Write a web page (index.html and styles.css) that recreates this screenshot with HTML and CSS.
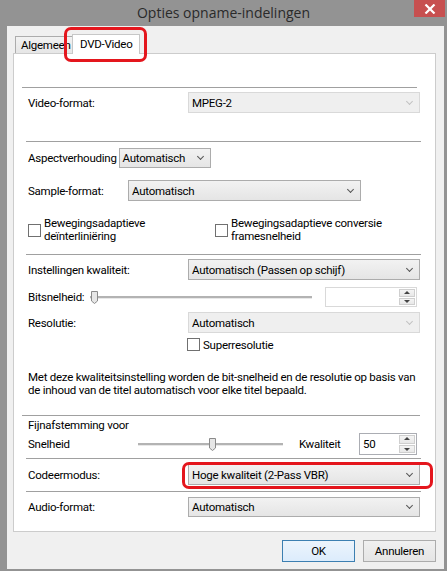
FILE: index.html
```html
<!DOCTYPE html>
<html lang="nl">

<head>
    <meta charset="UTF-8">
    <title>Opties opname-indelingen</title>
    <link rel="stylesheet" href="styles.css">
</head>

<body>
    <div class="window">
        <div class="titlebar">
            <span class="title">Opties opname-indelingen</span>
            <div class="close">
                <svg width="12" height="10" viewBox="0 0 12 10"><path d="M1.5 0.5 L10.5 9.5 M10.5 0.5 L1.5 9.5" stroke="#fff" stroke-width="2.2"/></svg>
            </div>
        </div>

        <div class="client">
            <div class="tabs">
                <div class="tab">Algemeen</div>
                <div class="tab active">DVD-Video</div>
            </div>

            <div class="panel">
                <div class="sep first"></div>

                <div class="row r-video">
                    <span class="label">Video-format:</span>
                    <div class="combo disabled wide">MPEG-2<span class="arrow"></span></div>
                </div>

                <div class="sep s2"></div>

                <div class="row r-aspect">
                    <span class="label short">Aspectverhouding</span>
                    <div class="combo aspect">Automatisch<span class="arrow"></span></div>
                </div>

                <div class="row r-sample">
                    <span class="label sample">Sample-format:</span>
                    <div class="combo sample-box">Automatisch<span class="arrow"></span></div>
                </div>

                <div class="row r-checks">
                    <div class="check c1">
                        <span class="box"></span>
                        <span>Bewegingsadaptieve<br>deïnterliniëring</span>
                    </div>
                    <div class="check c2">
                        <span class="box"></span>
                        <span>Bewegingsadaptieve conversie<br>framesnelheid</span>
                    </div>
                </div>

                <div class="sep s3"></div>

                <div class="row r-quality">
                    <span class="label">Instellingen kwaliteit:</span>
                    <div class="combo wide">Automatisch (Passen op schijf)<span class="arrow"></span></div>
                </div>

                <div class="row r-bits">
                    <span class="label bits">Bitsnelheid:</span>
                    <div class="slider bits-slider">
                        <span class="track"></span>
                        <svg class="thumb" width="7" height="13" viewBox="0 0 7 13"><path d="M0.5 0.5 H6.5 V10 L3.5 12.5 L0.5 10 Z" fill="#e6e6e6" stroke="#8a8a8a"/></svg>
                    </div>
                    <div class="spin dim">
                        <span class="spin-val"></span>
                        <span class="spin-btns"><span class="up"></span><span class="down"></span></span>
                    </div>
                </div>

                <div class="row r-res">
                    <span class="label">Resolutie:</span>
                    <div class="combo disabled wide">Automatisch<span class="arrow"></span></div>
                </div>

                <div class="row r-super">
                    <div class="check">
                        <span class="box"></span>
                        <span>Superresolutie</span>
                    </div>
                </div>

                <p class="info">Met deze kwaliteitsinstelling worden de bit-snelheid en de resolutie op basis van de inhoud van de titel automatisch voor elke titel bepaald.</p>

                <div class="sep s4"></div>

                <div class="fine-title">Fijnafstemming voor</div>
                <div class="row r-speed">
                    <span class="label speed">Snelheid</span>
                    <div class="slider speed-slider">
                        <span class="track"></span>
                        <svg class="thumb" width="7" height="13" viewBox="0 0 7 13"><path d="M0.5 0.5 H6.5 V10 L3.5 12.5 L0.5 10 Z" fill="#e6e6e6" stroke="#8a8a8a"/></svg>
                    </div>
                    <span class="kw">Kwaliteit</span>
                    <div class="spin small">
                        <span class="spin-val">50</span>
                        <span class="spin-btns"><span class="up"></span><span class="down"></span></span>
                    </div>
                </div>

                <div class="sep s5"></div>

                <div class="row r-codec">
                    <span class="label">Codeermodus:</span>
                    <div class="combo wide">Hoge kwaliteit (2-Pass VBR)<span class="arrow"></span></div>
                </div>

                <div class="sep s6"></div>

                <div class="row r-audio">
                    <span class="label">Audio-format:</span>
                    <div class="combo wide">Automatisch<span class="arrow"></span></div>
                </div>
            </div>

            <div class="buttons">
                <button class="btn default">OK</button>
                <button class="btn">Annuleren</button>
            </div>
        </div>

        <!-- red markings drawn over the screenshot -->
        <div class="mark mark-tab"></div>
        <div class="mark mark-codec"></div>
    </div>
</body>

</html>
```

FILE: styles.css
```css
body {
    margin: 0;
    font-family: Roboto, "Liberation Sans", Arial, sans-serif;
    font-size: 11.5px;
    letter-spacing: -0.25px;
    color: #000;
    background: #939393;
}

.window {
    position: relative;
    width: 447px;
    height: 571px;
    background: #939393;
    overflow: hidden;
}

.titlebar {
    height: 26px;
    display: flex;
    justify-content: center;
    align-items: center;
}

.title {
    font-size: 14px;
    letter-spacing: 0;
    color: #2a2a2a;
    margin-top: -2px;
    font-family: "Open Sans", "Liberation Sans", sans-serif;
}

.close {
    position: absolute;
    top: 0;
    left: 414px;
    width: 31px;
    height: 17px;
    background: #c75050;
    display: flex;
    align-items: center;
    justify-content: center;
}

.client {
    margin-left: 7px;
    width: 437px;
    height: 543px;
    background: #f0f0f0;
    padding-top: 8px;
    box-sizing: border-box;
}

/* tabs */
.tabs {
    display: flex;
    align-items: flex-end;
    height: 19px;
    padding-left: 8px;
    position: relative;
    z-index: 2;
}

.tab {
    height: 16px;
    line-height: 16px;
    padding: 0 5px;
    border: 1px solid #acacac;
    border-bottom: none;
    background: linear-gradient(#f2f2f2, #e6e6e6);
    width: 46px;
    white-space: nowrap;
}

.tab.active {
    position: relative;
    height: 19px;
    line-height: 19px;
    background: #fff;
    width: auto;
    padding: 0 7px;
    margin-left: -1px;
    margin-bottom: -1px;
    border-color: #c7c7c7;
}

.panel {
    margin-left: 6px;
    width: 421px;
    height: 477px;
    background: #fff;
    border: 1px solid #cccccc;
}

.sep {
    height: 0;
    border-top: 1px solid #a0a0a0;
    margin: 0 14px 0 12px;
}

.sep.first { margin-top: 33px; margin-left: 8px; margin-right: 18px; }
.sep.s2 { margin-top: 28px; }
.sep.s3 { margin-top: 11px; }
.sep.s4 { margin-top: 18px; margin-left: 8px; margin-right: 15px; }
.sep.s5 { margin-top: 3px; }
.sep.s6 { margin-top: 6px; }

.row {
    display: flex;
    align-items: center;
    padding-left: 14px;
}

.label {
    width: 160px;
    flex: none;
}

.label.short { width: auto; margin-right: 2px; }
.label.sample { width: 100px; }
.label.bits { width: 62px; }
.label.speed { width: 110px; }

.r-video { margin-top: 4px; height: 21px; }
.r-aspect { margin-top: 6px; height: 20px; }
.r-sample { margin-top: 12px; height: 21px; }
.r-checks { margin-top: 16px; height: 26px; line-height: 13px; }
.r-quality { margin-top: 4px; height: 21px; }
.r-bits { margin-top: 7px; height: 20px; }
.r-res { margin-top: 5px; height: 21px; }
.r-super { margin-top: 5px; height: 13px; padding-left: 173px; }
.r-speed { margin-top: 1px; height: 22px; }
.r-codec { margin-top: 5px; height: 21px; }
.r-audio { margin-top: 5px; height: 20px; }

/* combo boxes */
.combo {
    position: relative;
    height: 100%;
    box-sizing: border-box;
    border: 1px solid #acacac;
    background: linear-gradient(#f2f2f2, #e5e5e5);
    padding-left: 3px;
    display: flex;
    align-items: center;
    white-space: nowrap;
}

.combo.wide { width: 232px; }
.combo.aspect { width: 92px; }
.combo.sample-box { width: 233px; }

.combo.disabled {
    background: #efefef;
    border-color: #d9d9d9;
}

.arrow {
    position: absolute;
    right: 7px;
    top: 50%;
    width: 4px;
    height: 4px;
    margin-top: -4px;
    border-right: 1.5px solid #555;
    border-bottom: 1.5px solid #555;
    transform: rotate(45deg);
}

.disabled .arrow {
    border-color: #c2c2c2;
}

/* checkboxes */
.check {
    display: flex;
    align-items: center;
}

.check .box {
    width: 11px;
    height: 11px;
    border: 1px solid #707070;
    background: #fff;
    margin-right: 3px;
    flex: none;
}

.check.c1 { width: 187px; }

/* sliders */
.slider {
    position: relative;
    height: 14px;
}

.track {
    position: absolute;
    left: 0;
    right: 0;
    top: 5px;
    height: 2px;
    background: #b3b3b3;
    border-bottom: 1px solid #e8e8e8;
}

.thumb {
    position: absolute;
    top: 0;
}

.bits-slider { width: 222px; margin-top: 2px; }
.bits-slider .thumb { left: 1px; }

.speed-slider { width: 145px; margin-top: 2px; }
.speed-slider .thumb { left: 71px; }

.kw { margin-left: 16px; width: 60px; }

/* spin boxes */
.spin {
    display: flex;
    height: 100%;
    box-sizing: border-box;
    border: 1px solid #abadb3;
    background: #fff;
    margin-left: 13px;
}

.spin.dim { width: 92px; border-color: #d9d9d9; }
.spin.small { width: 58px; margin-left: 0; }

.spin-val {
    flex: 1;
    padding-left: 3px;
    display: flex;
    align-items: center;
}

.spin-btns {
    width: 16px;
    display: flex;
    flex-direction: column;
    padding: 1px;
    gap: 1px;
}

.spin-btns span {
    flex: 1;
    border: 1px solid #cfcfcf;
    background: linear-gradient(#f4f4f4, #e8e8e8) ;
    position: relative;
}

.spin-btns span::after {
    content: "";
    position: absolute;
    left: 50%;
    top: 50%;
    margin-left: -3px;
    border-left: 3px solid transparent;
    border-right: 3px solid transparent;
}

.spin-btns .up::after {
    margin-top: -2px;
    border-bottom: 3px solid #444;
}

.spin-btns .down::after {
    margin-top: -1px;
    border-top: 3px solid #444;
}

.info {
    margin: 20px 14px 0 14px;
    line-height: 13px;
}

.fine-title {
    margin-top: 3px;
    padding-left: 14px;
    line-height: 13px;
}

/* dialog buttons */
.buttons {
    display: flex;
    justify-content: flex-end;
    gap: 8px;
    margin-top: 8px;
    padding-right: 8px;
}

.btn {
    font-family: inherit;
    font-size: 11.5px;
    letter-spacing: -0.25px;
    width: 73px;
    height: 22px;
    border: 1px solid #acacac;
    background: linear-gradient(#f0f0f0, #e5e5e5);
    padding: 0;
    color: #000;
}

.btn.default {
    border-color: #3c7fb1;
    background: linear-gradient(#ecf4fc, #dcecfc);
}

/* annotation */
.mark {
    position: absolute;
    border: 3px solid #e4161d;
    border-radius: 7px;
    z-index: 5;
}

.mark-tab {
    left: 64px;
    top: 27px;
    width: 77px;
    height: 29px;
}

.mark-codec {
    left: 182px;
    top: 462px;
    width: 245px;
    height: 21px;
}
```
